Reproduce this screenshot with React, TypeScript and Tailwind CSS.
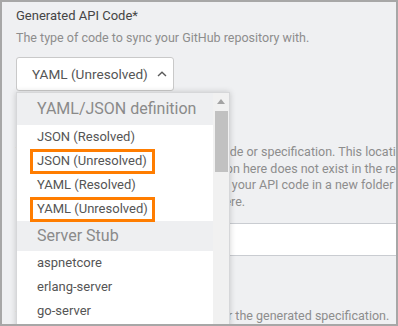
import React from "react";

const groups = [
  {
    title: "YAML/JSON definition",
    items: ["JSON (Resolved)", "JSON (Unresolved)", "YAML (Resolved)", "YAML (Unresolved)"],
  },
  {
    title: "Server Stub",
    items: ["aspnetcore", "erlang-server", "go-server", "inflector"],
  },
];

const marked = ["JSON (Unresolved)", "YAML (Unresolved)"];

function ChevronUp() {
  return (
    <svg width="10" height="6" viewBox="0 0 10 6" fill="none">
      <path d="M1 5L5 1.3L9 5" stroke="#5a5a5a" strokeWidth="1.4" />
    </svg>
  );
}

export default function App() {
  return (
    <div className="relative w-[398px] h-[326px] overflow-hidden border-2 border-[#a7a7a7] bg-[#eff0f2] font-['Roboto',sans-serif]">
      <div className="w-[460px] pl-[14px] pt-[6px]">
        <div className="text-[13px] leading-4 text-[#454545]">Generated API Code*</div>
        <div className="mt-[6px] text-[12.5px] leading-4 text-[#8d8d8d]">
          The type of code to sync your GitHub repository with.
        </div>
        <button className="mt-[11px] flex h-[34px] w-[158px] items-center gap-[9px] whitespace-nowrap rounded-[3px] border border-[#c9c9c9] bg-white pl-[15px] text-[13.6px] text-[#555]">
          <span>YAML (Unresolved)</span>
          <ChevronUp />
        </button>

        <div className="mt-[22px] text-[13px] leading-4 text-[#454545]">Output Folder*</div>
        <div className="mt-[15px] text-[12.5px] leading-[16.5px] text-[#8d8d8d] whitespace-nowrap">
          <div>The folder in your repository for API code or specification. This location</div>
          <div>is relative to the root path. If the location here does not exist in the repository,</div>
          <div>SwaggerHub creates it and then saves your API code in a new folder</div>
          <div>with the folder name and path given here.</div>
        </div>
        <div className="mt-[13px] h-[33px] w-full border-y border-[#c9ccd1] bg-white" />

        <div className="mt-[27px] text-[13px] leading-4 text-[#454545]">File Name</div>
        <div className="mt-[9px] text-[12.5px] leading-4 text-[#8d8d8d] whitespace-nowrap">
          The name of the new file to be used for the generated specification.
        </div>
      </div>

      <div className="absolute left-[14px] top-[90px] flex w-[214px] border border-[#d6d7d9] bg-white shadow-[0_0_6px_rgba(0,0,0,0.18)]">
        <div className="w-[196px]">
          {groups.map((g, gi) => (
            <div key={g.title}>
              <div
                className={
                  gi === 0
                    ? "flex h-[32px] items-center bg-[#eeeff1] pl-[20px] text-[16px] text-[#8a8a8a]"
                    : "flex h-[30px] items-center bg-[#eeeff1] pl-[20px] text-[16px] text-[#8a8a8a]"
                }
              >
                {g.title}
              </div>
              {g.items.map((it) => (
                <div key={it} className="relative flex h-[24px] items-center pl-[20px] text-[13px] text-[#555]">
                  {it}
                  {marked.includes(it) && (
                    <span className="absolute left-[13px] top-[0px] h-[25px] w-[125px] border-[3px] border-[#ff7d00]" />
                  )}
                </div>
              ))}
            </div>
          ))}
        </div>
        <div className="relative w-[16px] bg-[#f1f1f1]">
          <svg className="absolute left-[4px] top-[6px]" width="8" height="5" viewBox="0 0 8 5">
            <path d="M0 5L4 0L8 5Z" fill="#a3a3a3" />
          </svg>
          <div className="absolute left-[2px] top-[18px] h-[61px] w-[13px] bg-[#c1c1c1]" />
        </div>
      </div>
    </div>
  );
}
